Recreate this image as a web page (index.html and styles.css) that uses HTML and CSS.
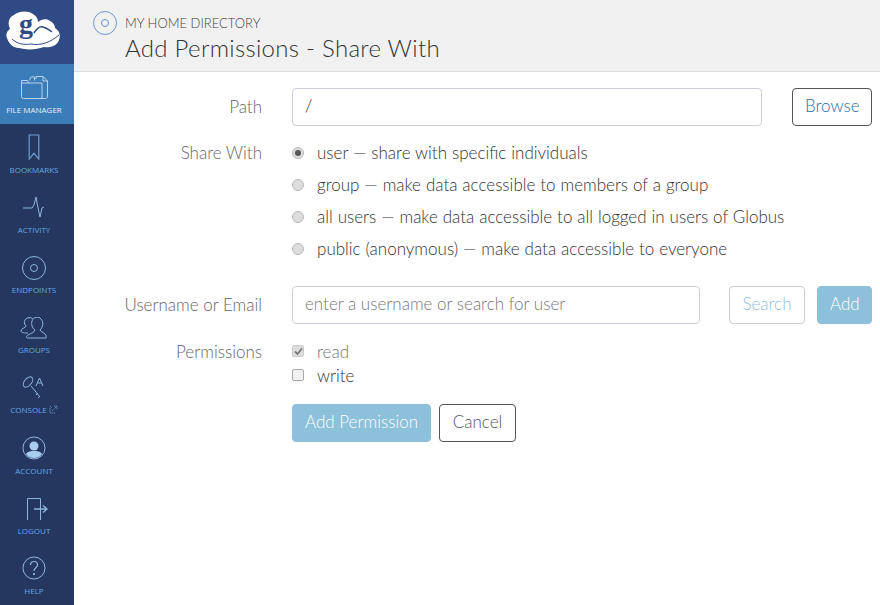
FILE: index.html
```html
<!DOCTYPE html>
<html lang="en">
<head>
  <meta charset="UTF-8" />
  <title>Add Permissions - Share With</title>
  <link rel="stylesheet" href="styles.css">
</head>
<body>

<nav class="sidebar">
  <div class="logo">
    <svg width="56" height="46" viewBox="0 -6 56 46">
      <path d="M1 27C-1 23 2 19 4 18 1 12 3 6 8 4 12 0 22-1 27 3c4 3 5 5 5 8 3-3 9-4 12-1 4 2 5 5 5 7 4 2 6 7 4 12-2 6-9 8-15 7-8 3-18 3-25 1C7 37 3 33 1 27z" fill="#fff"/>
      <path d="M28 22c3-5 6-7 9-6 4 1 6 3 9 5" fill="none" stroke="#2f4a85" stroke-width="1.500"/>
      <path d="M6 28c5 5 12 6 19 5 10 2 20-2 28-9" fill="none" stroke="#2f4a85" stroke-width="1"/>
      <text x="13" y="22" class="logo-g">g</text>
    </svg>
  </div>
  <a class="nav-item active">
    <svg width="27" height="23" viewBox="0 0 27 23" fill="none" stroke="#b9d3ea" stroke-width="1">
      <path d="M.5 7V4.500h6l1 2.500M.5 7h20.500v15.500H2.500a2 2 0 0 1-2-2z"/>
      <path d="M9 4.500V3a2 2 0 0 1 2-2h2.500v3.500M15 3V.5h7l4.500 4.500v15.500a2 2 0 0 1-2 2H21M22 .5V5h4.500"/>
    </svg>
    <span>FILE MANAGER</span>
  </a>
  <a class="nav-item">
    <svg class="icon-low" width="12" height="26" viewBox="0 0 12 27" fill="none" stroke="#6f9fd0" stroke-width="1.200">
      <path d="M1 1h10v25l-5-6-5 6z"/>
    </svg>
    <span>BOOKMARKS</span>
  </a>
  <a class="nav-item">
    <svg width="22" height="22" viewBox="0 0 22 22" fill="none" stroke="#8fb6dc" stroke-width="1">
      <path d="M0 11h9l2-3 2-8 2 11 2 9 2-9 2-1"/>
    </svg>
    <span>ACTIVITY</span>
  </a>
  <a class="nav-item">
    <svg class="icon-low" width="24" height="24" viewBox="0 0 24 24" fill="none" stroke="#8fb6dc" stroke-width="1">
      <circle cx="12" cy="12" r="11.500"/>
      <circle cx="12" cy="12" r="3.500"/>
    </svg>
    <span>ENDPOINTS</span>
  </a>
  <a class="nav-item">
    <svg width="28" height="22" viewBox="0 0 28 22" fill="none" stroke="#8fb6dc" stroke-width="1">
      <path d="M8 16c-3 0-7 0-7-2 0-3 5-3 5-5C4 7 4 5 5 3c2-3 6-3 8-1"/>
      <path d="M8 21c-2 0-2-2 0-3 3-2 6-2 7-5-3-2-4-6-3-9 1-4 7-5 9-2 3 3 2 8-1 11 2 3 7 3 6 8z"/>
    </svg>
    <span>GROUPS</span>
  </a>
  <a class="nav-item">
    <svg class="icon-low" width="26" height="24" viewBox="0 0 26 24" fill="none" stroke="#8fb6dc" stroke-width="1">
      <ellipse cx="7" cy="6" rx="3.500" ry="6" transform="rotate(40 7 6)"/>
      <path d="M10 10l9 11M15 19l2-2M17 22l2-2"/>
      <path d="M15 10l3.500-8 3.500 8M16.500 7h4"/>
    </svg>
    <span>CONSOLE <svg class="ext" width="9" height="9" viewBox="0 0 9 9" fill="none" stroke="#6f9fd0" stroke-width=".8" stroke-dasharray="1.500 .7"><path d="M1 3v5h5M3 6l5-5M5 1h3v3M1 1l2 2"/></svg></span>
  </a>
  <a class="nav-item nav-tall">
    <svg width="24" height="24" viewBox="0 0 24 24">
      <circle cx="12" cy="12" r="11" fill="none" stroke="#8fb6dc" stroke-width="1"/>
      <circle cx="12" cy="10" r="4.500" fill="#a9cdec"/>
      <path d="M4 18c2-3 5-3 8-3s6 0 8 3c-2 3-5 4-8 4s-6-1-8-4z" fill="#a9cdec"/>
    </svg>
    <span>ACCOUNT</span>
  </a>
  <a class="nav-item">
    <svg width="28" height="22" viewBox="0 0 28 22" fill="none" stroke="#8fb6dc" stroke-width="1">
      <path d="M7.500 22V.5h13V22"/>
      <path d="M14 11h13M23 7.500l4 3.500-4 3.500" stroke-width="1.400"/>
    </svg>
    <span>LOGOUT</span>
  </a>
  <a class="nav-item">
    <svg width="24" height="24" viewBox="0 0 24 24" fill="none" stroke="#8fb6dc" stroke-width="1">
      <circle cx="12" cy="12" r="11"/>
      <path d="M8.500 9c0-2 1.500-3.500 3.500-3.500s3.500 1.500 3.500 3.200c0 3-3.500 3-3.500 6.300" stroke-width="1.200"/>
      <circle cx="12" cy="18" r=".7" fill="#8fb6dc"/>
    </svg>
    <span>HELP</span>
  </a>
</nav>

<div class="main">
  <header class="page-header">
    <div class="crumb">
      <svg width="24" height="24" viewBox="0 0 24 24" fill="none" stroke="#6f93d6" stroke-width="1">
        <circle cx="12" cy="12" r="11.500"/>
        <circle cx="12" cy="12" r="3.500"/>
      </svg>
      <span>MY HOME DIRECTORY</span>
    </div>
    <h1>Add Permissions - Share With</h1>
  </header>

  <form class="form">
    <div class="row row-path">
      <label class="label">Path</label>
      <div class="input path-input">/</div>
      <button type="button" class="btn btn-outline browse">Browse</button>
    </div>

    <div class="row row-share">
      <label class="label">Share With</label>
      <div class="options">
        <div class="option"><span class="radio checked"></span>user — share with specific individuals</div>
        <div class="option"><span class="radio"></span>group — make data accessible to members of a group</div>
        <div class="option"><span class="radio"></span>all users — make data accessible to all logged in users of Globus</div>
        <div class="option"><span class="radio"></span>public (anonymous) — make data accessible to everyone</div>
      </div>
    </div>

    <div class="row row-user">
      <label class="label">Username or Email</label>
      <div class="input user-input">enter a username or search for user</div>
      <button type="button" class="btn btn-faded search">Search</button>
      <button type="button" class="btn btn-primary add">Add</button>
    </div>

    <div class="row row-perm">
      <label class="label">Permissions</label>
      <div class="checks">
        <div class="check-line muted">
          <span class="check checked">
            <svg width="9" height="9" viewBox="0 0 9 9" fill="none" stroke="#777" stroke-width="1.800"><path d="M1 4.500l2.500 2.500L8 1.500"/></svg>
          </span>read
        </div>
        <div class="check-line"><span class="check"></span>write</div>
      </div>
    </div>

    <div class="actions">
      <button type="button" class="btn btn-primary">Add Permission</button>
      <button type="button" class="btn btn-outline cancel">Cancel</button>
    </div>
  </form>
</div>

</body>
</html>
```

FILE: styles.css
```css
* {
  box-sizing: border-box;
}

html, body {
  height: 100%;
}

body {
  margin: 0;
  display: flex;
  overflow: hidden;
  font-family: Lato, sans-serif;
  font-weight: 300;
  font-size: 17px;
  color: #333;
  background-color: #fff;
}

.sidebar {
  width: 74px;
  flex-shrink: 0;
  background-color: #26375f;
}

.logo {
  height: 64px;
  background-color: #2f4a85;
  display: flex;
  justify-content: center;
  padding: 5px 6px 0 0;
}

.logo-g {
  font-family: "Liberation Serif", serif;
  font-weight: 700;
  font-size: 28px;
  fill: #2f4a85;
}

.nav-item {
  height: 60px;
  display: flex;
  flex-direction: column;
  align-items: center;
  justify-content: flex-end;
  gap: 5px;
  padding: 0 6px 9px 0;
  font-family: "Open Sans", sans-serif;
  font-weight: 400;
  font-size: 8px;
  line-height: 11px;
  white-space: nowrap;
  color: #63a7e6;
}

.nav-item.active {
  background-color: #3a7db8;
  color: #e4f0fa;
}

.nav-tall {
  height: 61px;
}

.icon-low {
  margin-bottom: -1px;
}

.ext {
  vertical-align: -1px;
}

.main {
  flex: 1;
  min-width: 0;
}

.page-header {
  height: 72px;
  padding: 11px 0 0 19px;
  background-color: #f1f1f1;
  border-bottom: 1px solid #ddd;
}

.crumb {
  display: flex;
  align-items: center;
  gap: 8px;
  font-size: 13px;
  font-weight: 300;
  line-height: 24px;
  color: #444;
}

.page-header h1 {
  margin: -2px 0 0 32px;
  font-size: 24px;
  font-weight: 300;
  line-height: 30px;
  letter-spacing: 0.3px;
  color: #333;
}

.form {
  padding: 16px 8px 0 0;
}

.row {
  display: flex;
  align-items: center;
}

.label {
  width: 188px;
  margin-right: 30px;
  padding-bottom: 2px;
  flex-shrink: 0;
  text-align: right;
  color: #666;
}

.input {
  height: 38px;
  padding: 0 12px 3px;
  display: flex;
  align-items: center;
  background-color: #fff;
  border: 1px solid #ccd;
  border-radius: 4px;
}

.path-input {
  width: 470px;
  color: #333;
}

.user-input {
  width: 408px;
  color: #777;
}

.btn {
  height: 38px;
  padding: 0 12px 3px;
  font-family: Lato, sans-serif;
  font-weight: 300;
  font-size: 17px;
  border-radius: 4px;
  background-color: #fff;
}

.btn-outline {
  border: 1px solid #555;
  color: #1f6fa8;
}

.btn-faded {
  border: 1px solid #ccc;
  color: #8cc2de;
}

.btn-primary {
  border: 1px solid #8dc0db;
  background-color: #8dc0db;
  color: #fff;
}

.browse {
  width: 80px;
  margin-left: 30px;
}

.row-share {
  align-items: flex-start;
  margin-top: 11px;
}

.row-share .label {
  padding: 0;
  line-height: 32px;
}

.option {
  height: 32px;
  display: flex;
  align-items: center;
  line-height: 30px;
  word-spacing: 0.3px;
}

.radio {
  width: 12px;
  height: 12px;
  margin-right: 13px;
  border-radius: 50%;
  background-color: #ddd;
  border: 1px solid #bbb;
  display: flex;
  align-items: center;
  justify-content: center;
}

.radio.checked::after {
  content: "";
  width: 6px;
  height: 6px;
  border-radius: 50%;
  background-color: #555;
}

.row-user {
  margin-top: 21px;
}

.search {
  width: 76px;
  margin-left: 29px;
}

.add {
  width: 55px;
  margin-left: 12px;
}

.row-perm {
  align-items: flex-start;
  margin-top: 15px;
}

.row-perm .label {
  padding: 0;
  line-height: 26px;
}

.check-line {
  height: 24px;
  display: flex;
  align-items: center;
}

.check-line.muted {
  color: #777;
}

.check {
  width: 12px;
  height: 12px;
  margin-right: 13px;
  border: 1px solid #aaa;
  border-radius: 2px;
  background-color: #f1f1f1;
  display: flex;
  align-items: center;
  justify-content: center;
}

.check.checked {
  background-color: #ddd;
  border-color: #ccc;
}

.actions {
  margin: 17px 0 0 218px;
  display: flex;
  gap: 8px;
}

.cancel {
  width: 77px;
  color: #555;
}
```
